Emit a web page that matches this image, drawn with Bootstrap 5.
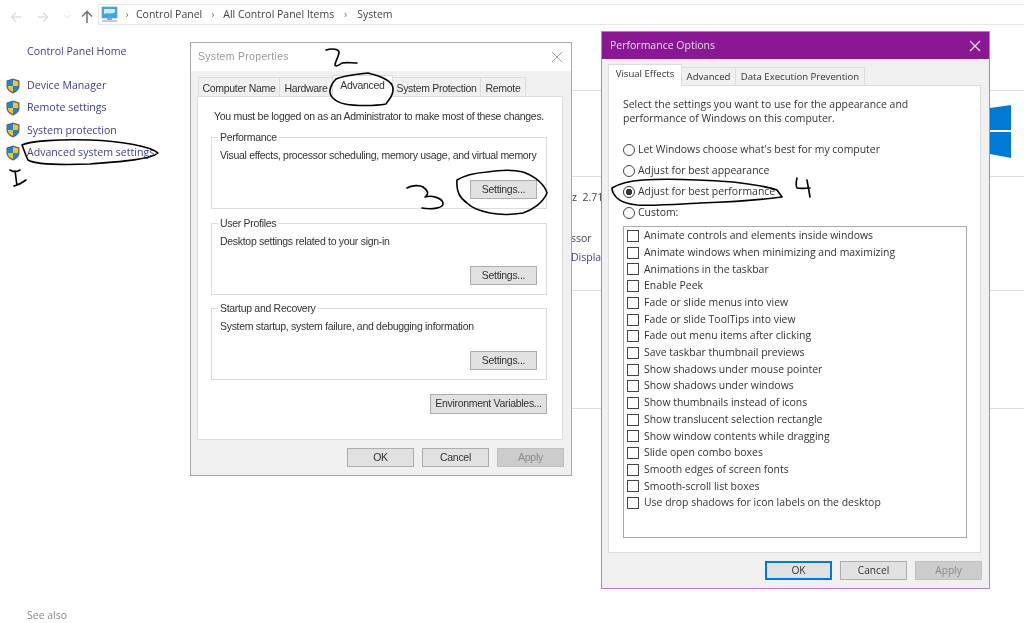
<!DOCTYPE html>
<html lang="en">
<head>
<meta charset="utf-8">
<title>System</title>
<link href="https://cdn.jsdelivr.net/npm/bootstrap@5.3.0/dist/css/bootstrap.min.css" rel="stylesheet">
<style>
html,body{height:623px;overflow:hidden;background:#fff}
body{font-family:"Open Sans","Liberation Sans",sans-serif;font-size:10.5px;color:#333;position:relative;filter:blur(.35px)}
.topbar{height:29px;padding-top:4px}
.navarrows{width:98px;padding-left:10px;gap:15px}
.addr{height:21px;border:1px solid #e6e6e6;border-right:0;padding-left:2px;font-size:10.5px;color:#444}
.addr span{white-space:nowrap}
.crumb-gap{width:21px;text-align:center;color:#777}
.crumb-last{width:23px}
.side{width:190px;padding:15px 0 0 6px}
.side a{color:#3f3f8f;text-decoration:none;display:block;white-space:nowrap;font-size:10.6px}
.sidehome{padding-left:21px;height:31px}
.siderow{height:22.2px;gap:7px}
.seealso{position:absolute;left:27px;top:608px;color:#888}
.bgmain{position:absolute;left:572px;top:29px;right:0;color:#444;white-space:nowrap;overflow:hidden}
.bgsec{border-bottom:1px solid #ddd}
.bgspec{height:114px;padding-top:13px;line-height:15px}
.bgline-a{margin-top:26px;margin-left:-1px}
.bgline-b{margin-top:4px;margin-left:-1px;color:#3f3f8f}
.winlogo{position:absolute;left:989px;top:105px}
.win{position:absolute;background:#f0f0f0;font-family:"Liberation Sans",sans-serif;font-size:10.5px;letter-spacing:-.3px;color:#333}
.syswin{left:190px;top:42px;width:382px;height:434px;border:1px solid #a6a6a6}
.wintitle{height:28px;padding:0 8px 0 7px}
.syswin .wintitle{background:#fff;color:#9a9a9a;letter-spacing:.3px;font-size:10.5px}
.tabstrip{padding:6px 0 0 7px;height:25px}
.wtab{height:20px;padding:0;text-align:center;border:1px solid #dcdcdc;border-bottom:0;background:#f0f0f0;white-space:nowrap;line-height:20px;margin-right:-1px}
.wtab-on{background:#fff;height:22px;margin-top:-2px;position:relative;z-index:1;line-height:19px}
.wtab-w81{width:82px}
.wtab-w53{width:54px}
.wtab-w60{width:61px}
.wtab-w88{width:89px}
.wtab-w45{width:46px}
.wpanel{background:#fff;border:1px solid #dcdcdc;position:relative}
.syspanel{margin:0 8px 0 6px;height:344px;padding:12px 15px 0 13px}
.sysnote{line-height:14px;margin:0 0 14px 3px;white-space:nowrap}
.grp{border:1px solid #dcdcdc;height:72px;margin-bottom:13.5px;position:relative;padding:10px 9px 0 8px;white-space:nowrap}
.grpname{position:absolute;left:6px;top:-7px;background:#fff;padding:0 2px;line-height:13px}
.winbtn{--bs-btn-padding-y:0;--bs-btn-padding-x:0;--bs-btn-font-size:10.5px;--bs-btn-color:#333;--bs-btn-bg:#e1e1e1;--bs-btn-border-color:#adadad;--bs-btn-border-radius:0;--bs-btn-line-height:17px;--bs-btn-hover-bg:#e1e1e1;--bs-btn-hover-color:#333;--bs-btn-hover-border-color:#adadad;height:19px;width:67px;letter-spacing:-.3px}
.winbtn-off{background:#ccc;border-color:#bfbfbf;color:#8a8a8a}
.winbtn-def{border:2px solid #0078d7;line-height:15px}
.winbtn-wide{width:117px;height:20px}
.grpact{position:absolute;right:9px;bottom:9px}
.footer{padding:8px 7px 0 0;gap:8px}
.perfwin{left:601px;top:31px;width:389px;height:558px;border:1px solid #b87cc8;font-family:"Open Sans","Liberation Sans",sans-serif;font-size:10.45px;letter-spacing:0}
.perfwin .wintitle{background:#8a1794;color:#e8d6ea;height:27px;padding:0 8px 0 8px;font-size:10.5px}
.perfwin .winbtn{--bs-btn-font-size:10.2px;letter-spacing:0}
.perfstrip{padding:7px 0 0 6px;height:26px;font-size:9.6px}
.perfstrip .wtab{line-height:18px}
.wtab-pv{width:74px;line-height:17px}
.wtab-pa{width:55px;margin-top:1px;height:18px}
.wtab-pd{width:130px;margin-top:1px;height:18px}
.perfpanel{margin:0 8px 0 6px;height:468px;padding:11px 13px 0 14px}
.perfpanel p{line-height:14px;margin:0 0 14px}
.radrow{height:21.2px;gap:3px;white-space:nowrap}
.radrow input,.chkrow input{margin:0;flex:none;border-color:#444;background-color:#fff;box-shadow:none}
.radrow input[type=radio]{width:12px;height:12px;border-radius:50%}
.radrow input:checked{background-color:#fff;border-color:#333;background-image:radial-gradient(circle,#333 0,#333 3px,transparent 3.5px)}
.chkrow input[type=checkbox]{width:12px;height:12px;border-radius:0}
.listbox{border:1px solid #a8a8a8;height:312px;margin-top:2px;padding-top:1px}
.chkrow{height:16.7px;padding-left:3px;gap:5px;white-space:nowrap}
.ink{position:absolute;left:0;top:0;pointer-events:none;z-index:5}
</style>
</head>
<body>
<div class="d-flex topbar">
  <div class="d-flex align-items-center navarrows">
    <svg width="12" height="12" viewBox="0 0 12 12" fill="none" stroke="#ddd" stroke-width="1.4"><path d="M11 6H1.500M6 1.500 1.500 6 6 10.500"/></svg>
    <svg width="12" height="12" viewBox="0 0 12 12" fill="none" stroke="#ddd" stroke-width="1.4"><path d="M1 6h9.500M6 1.500 10.500 6 6 10.500"/></svg>
    <svg width="7" height="5" viewBox="0 0 7 5" fill="none" stroke="#ddd"><path d="M.5 1 3.500 4l3-3"/></svg>
    <svg width="12" height="13" viewBox="0 0 12 13" fill="none" stroke="#777" stroke-width="1.6" style="margin-left:-5px"><path d="M6 13V1.500M1 6.500l5-5 5 5"/></svg>
  </div>
  <div class="d-flex flex-grow-1 align-items-center addr">
    <svg width="17" height="17" viewBox="0 0 17 17"><rect x="1" y="1" width="15" height="11" fill="#3aa7e8" stroke="#8a9aa8" stroke-width=".8"/><path d="M3 3h11v3C10 9 6 6 3 8z" fill="#cfeeff"/><rect x="6" y="12" width="5" height="2" fill="#9aa7b0"/><rect x="1" y="14" width="15" height="2" fill="#c4ccd2"/></svg>
    <span class="crumb-gap" style="width:18px">›</span>
    <span>Control Panel</span>
    <span class="crumb-gap">›</span>
    <span>All Control Panel Items</span>
    <span class="crumb-gap crumb-last">›</span>
    <span>System</span>
  </div>
</div>

<div class="side">
  <div class="sidehome"><a href="#">Control Panel Home</a></div>
  <div class="d-flex align-items-center siderow"><svg width="14" height="16" viewBox="0 0 14 16"><path d="M7 .5 13.500 2.500V8c0 3.500-3 6-6.500 7.500C3.500 14 .5 11.500.5 8V2.500z" fill="#5c6670"/><path d="M7 2v6H1.800V3.500z" fill="#1f83d6"/><path d="M7 2l5.200 1.500V8H7z" fill="#f4c430"/><path d="M1.800 8H7v6C4 13 1.800 11 1.800 8z" fill="#f4c430"/><path d="M7 8h5.200c0 3-2.200 5-5.200 6z" fill="#1f83d6"/></svg><a href="#">Device Manager</a></div>
  <div class="d-flex align-items-center siderow"><svg width="14" height="16" viewBox="0 0 14 16"><path d="M7 .5 13.500 2.500V8c0 3.500-3 6-6.500 7.500C3.500 14 .5 11.500.5 8V2.500z" fill="#5c6670"/><path d="M7 2v6H1.800V3.500z" fill="#1f83d6"/><path d="M7 2l5.200 1.500V8H7z" fill="#f4c430"/><path d="M1.800 8H7v6C4 13 1.800 11 1.800 8z" fill="#f4c430"/><path d="M7 8h5.200c0 3-2.200 5-5.200 6z" fill="#1f83d6"/></svg><a href="#">Remote settings</a></div>
  <div class="d-flex align-items-center siderow"><svg width="14" height="16" viewBox="0 0 14 16"><path d="M7 .5 13.500 2.500V8c0 3.500-3 6-6.500 7.500C3.500 14 .5 11.500.5 8V2.500z" fill="#5c6670"/><path d="M7 2v6H1.800V3.500z" fill="#1f83d6"/><path d="M7 2l5.200 1.500V8H7z" fill="#f4c430"/><path d="M1.800 8H7v6C4 13 1.800 11 1.800 8z" fill="#f4c430"/><path d="M7 8h5.200c0 3-2.200 5-5.200 6z" fill="#1f83d6"/></svg><a href="#">System protection</a></div>
  <div class="d-flex align-items-center siderow"><svg width="14" height="16" viewBox="0 0 14 16"><path d="M7 .5 13.500 2.500V8c0 3.500-3 6-6.500 7.500C3.500 14 .5 11.500.5 8V2.500z" fill="#5c6670"/><path d="M7 2v6H1.800V3.500z" fill="#1f83d6"/><path d="M7 2l5.200 1.500V8H7z" fill="#f4c430"/><path d="M1.800 8H7v6C4 13 1.800 11 1.800 8z" fill="#f4c430"/><path d="M7 8h5.200c0 3-2.200 5-5.200 6z" fill="#1f83d6"/></svg><a href="#">Advanced system settings</a></div>
</div>
<div class="seealso">See also</div>

<div class="bgmain">
  <div class="bgsec" style="height:62px"></div>
  <div class="bgsec" style="height:86px"></div>
  <div class="bgsec bgspec">
    <div>z&nbsp;&nbsp;2.71</div>
    <div class="bgline-a">ssor</div>
    <div class="bgline-b">Display</div>
  </div>
  <div class="bgsec" style="height:118px"></div>
</div>
<svg class="winlogo" width="22" height="54" viewBox="0 0 22 54"><path d="M1 3 22 0V25H1z" fill="#0078d4"/><path d="M1 27H22V53L1 49z" fill="#0078d4"/></svg>

<div class="win syswin">
  <div class="d-flex align-items-center justify-content-between wintitle">
    <span>System Properties</span>
    <svg width="12" height="12" viewBox="0 0 12 12" stroke="#9a9a9a"><path d="M1 1l10 10M11 1 1 11"/></svg>
  </div>
  <div class="d-flex align-items-start tabstrip">
    <div class="wtab wtab-w81">Computer Name</div><div class="wtab wtab-w53">Hardware</div><div class="wtab wtab-on wtab-w60">Advanced</div><div class="wtab wtab-w88">System Protection</div><div class="wtab wtab-w45">Remote</div>
  </div>
  <div class="wpanel syspanel">
    <div class="sysnote">You must be logged on as an Administrator to make most of these changes.</div>
    <div class="grp"><span class="grpname">Performance</span>Visual effects, processor scheduling, memory usage, and virtual memory<div class="grpact"><button class="btn winbtn" type="button">Settings...</button></div></div>
    <div class="grp"><span class="grpname">User Profiles</span>Desktop settings related to your sign-in<div class="grpact"><button class="btn winbtn" type="button">Settings...</button></div></div>
    <div class="grp"><span class="grpname">Startup and Recovery</span>System startup, system failure, and debugging information<div class="grpact"><button class="btn winbtn" type="button">Settings...</button></div></div>
    <div class="d-flex justify-content-end"><button class="btn winbtn winbtn-wide" type="button">Environment Variables...</button></div>
  </div>
  <div class="d-flex justify-content-end footer">
    <button class="btn winbtn" type="button">OK</button><button class="btn winbtn" type="button">Cancel</button><button class="btn winbtn winbtn-off" type="button">Apply</button>
  </div>
</div>

<div class="win perfwin">
  <div class="d-flex align-items-center justify-content-between wintitle">
    <span>Performance Options</span>
    <svg width="12" height="12" viewBox="0 0 12 12" stroke="#f2e6f4" stroke-width="1.2"><path d="M1 1l10 10M11 1 1 11"/></svg>
  </div>
  <div class="d-flex align-items-start perfstrip">
    <div class="wtab wtab-on wtab-pv">Visual Effects</div><div class="wtab wtab-pa">Advanced</div><div class="wtab wtab-pd">Data Execution Prevention</div>
  </div>
  <div class="wpanel perfpanel">
    <p>Select the settings you want to use for the appearance and<br>performance of Windows on this computer.</p>
    <div class="d-flex align-items-center radrow"><input class="form-check-input" type="radio" name="fx"><span>Let Windows choose what's best for my computer</span></div>
    <div class="d-flex align-items-center radrow"><input class="form-check-input" type="radio" name="fx"><span>Adjust for best appearance</span></div>
    <div class="d-flex align-items-center radrow"><input class="form-check-input" type="radio" name="fx" checked><span>Adjust for best performance</span></div>
    <div class="d-flex align-items-center radrow"><input class="form-check-input" type="radio" name="fx"><span>Custom:</span></div>
    <div class="listbox">
      <div class="d-flex align-items-center chkrow"><input class="form-check-input" type="checkbox"><span>Animate controls and elements inside windows</span></div>
      <div class="d-flex align-items-center chkrow"><input class="form-check-input" type="checkbox"><span>Animate windows when minimizing and maximizing</span></div>
      <div class="d-flex align-items-center chkrow"><input class="form-check-input" type="checkbox"><span>Animations in the taskbar</span></div>
      <div class="d-flex align-items-center chkrow"><input class="form-check-input" type="checkbox"><span>Enable Peek</span></div>
      <div class="d-flex align-items-center chkrow"><input class="form-check-input" type="checkbox"><span>Fade or slide menus into view</span></div>
      <div class="d-flex align-items-center chkrow"><input class="form-check-input" type="checkbox"><span>Fade or slide ToolTips into view</span></div>
      <div class="d-flex align-items-center chkrow"><input class="form-check-input" type="checkbox"><span>Fade out menu items after clicking</span></div>
      <div class="d-flex align-items-center chkrow"><input class="form-check-input" type="checkbox"><span>Save taskbar thumbnail previews</span></div>
      <div class="d-flex align-items-center chkrow"><input class="form-check-input" type="checkbox"><span>Show shadows under mouse pointer</span></div>
      <div class="d-flex align-items-center chkrow"><input class="form-check-input" type="checkbox"><span>Show shadows under windows</span></div>
      <div class="d-flex align-items-center chkrow"><input class="form-check-input" type="checkbox"><span>Show thumbnails instead of icons</span></div>
      <div class="d-flex align-items-center chkrow"><input class="form-check-input" type="checkbox"><span>Show translucent selection rectangle</span></div>
      <div class="d-flex align-items-center chkrow"><input class="form-check-input" type="checkbox"><span>Show window contents while dragging</span></div>
      <div class="d-flex align-items-center chkrow"><input class="form-check-input" type="checkbox"><span>Slide open combo boxes</span></div>
      <div class="d-flex align-items-center chkrow"><input class="form-check-input" type="checkbox"><span>Smooth edges of screen fonts</span></div>
      <div class="d-flex align-items-center chkrow"><input class="form-check-input" type="checkbox"><span>Smooth-scroll list boxes</span></div>
      <div class="d-flex align-items-center chkrow"><input class="form-check-input" type="checkbox"><span>Use drop shadows for icon labels on the desktop</span></div>
    </div>
  </div>
  <div class="d-flex justify-content-end footer">
    <button class="btn winbtn winbtn-def" type="button">OK</button><button class="btn winbtn" type="button">Cancel</button><button class="btn winbtn winbtn-off" type="button">Apply</button>
  </div>
</div>

<svg class="ink" width="1024" height="623" viewBox="0 0 1024 623" fill="none" stroke="#000" stroke-width="1.6" stroke-linecap="round" stroke-linejoin="round">
  <path d="M22 145C30 141 60 139 90 140C120 141 150 146 158 153C150 160 115 162 90 164C60 165 35 165 28 160C26 156 24 150 22 145Z"/>
  <path d="M10 170C13 172 17 172 20 170M15 171C16 176 16 181 17 185M14 186C18 185 22 183 26 180"/>
  <path d="M326 50C332 48 340 49 339 53C338 58 335 62 335 65C335 67 340 65 342 63C347 62 352 63 357 63"/>
  <path d="M336 79C345 75 360 74 368 73C380 76 392 80 393 88C394 96 388 100 386 104C375 106 355 106 345 104C335 102 329 96 330 90C331 85 333 82 336 79Z"/>
  <path d="M407 188C412 185 420 185 423 187C427 190 430 193 425 197C432 195 442 198 443 203C444 208 432 210 422 208"/>
  <path d="M457 180C465 175 475 173 487 172C500 170 515 170 523 172C535 176 545 185 547 193C543 203 532 210 523 213C510 215 500 215 490 213C480 211 472 208 467 203C460 198 456 192 457 180Z"/>
  <path d="M612 188C620 183 630 181 643 180C670 178 705 180 733 182C750 184 765 186 777 190L782 197C760 200 730 202 700 203C680 204 655 206 637 205C628 204 620 201 617 198C614 195 612 192 612 188Z"/>
  <path d="M797 178C796 182 796 186 797 188C801 189 806 188 810 188M807 180C808 186 809 191 810 197"/>
</svg>
</body>
</html>
